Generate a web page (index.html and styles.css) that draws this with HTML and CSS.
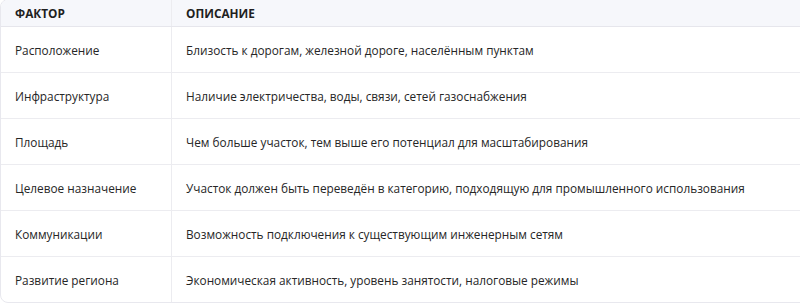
FILE: index.html
```html
<!DOCTYPE html>
<html lang="ru">
<head>
<meta charset="utf-8">
<link rel="stylesheet" href="styles.css">
</head>
<body>
<div class="wrap">
<table class="factors">
  <thead>
    <tr><th class="c1">Фактор</th><th>Описание</th></tr>
  </thead>
  <tbody>
    <tr><td class="c1">Расположение</td><td>Близость к дорогам, железной дороге, населённым пунктам</td></tr>
    <tr><td class="c1">Инфраструктура</td><td>Наличие электричества, воды, связи, сетей газоснабжения</td></tr>
    <tr><td class="c1">Площадь</td><td>Чем больше участок, тем выше его потенциал для масштабирования</td></tr>
    <tr><td class="c1">Целевое назначение</td><td>Участок должен быть переведён в категорию, подходящую для промышленного использования</td></tr>
    <tr><td class="c1">Коммуникации</td><td>Возможность подключения к существующим инженерным сетям</td></tr>
    <tr><td class="c1">Развитие региона</td><td>Экономическая активность, уровень занятости, налоговые режимы</td></tr>
  </tbody>
</table>
</div>
</body>
</html>
```
FILE: styles.css
```css
html, body {
  margin: 0;
  padding: 0;
  background: #ffffff;
  overflow: hidden;
}
.wrap {
  width: 830px;
  margin-top: -1px;
  border: 1px solid #e8e8ee;
  border-radius: 8px;
  overflow: hidden;
}
.factors {
  width: 100%;
  border-collapse: collapse;
  font-family: "Open Sans", "Noto Sans", sans-serif;
  font-size: 11.8px;
  color: #262626;
}
.factors th {
  background: #f6f7fb;
  text-align: left;
  font-weight: 700;
  text-transform: uppercase;
  font-size: 11.8px;
  color: #1f1f1f;
  height: 26px;
  padding: 0 14px;
  border-bottom: 1px solid #e6e6ec;
}
.factors td {
  height: 45px;
  padding: 0 14px;
  border-bottom: 1px solid #ececf0;
}
.factors tbody tr:last-child td {
  border-bottom: none;
}
.factors .c1 {
  width: 142px;
  border-right: 1px solid #ececf0;
}
```
